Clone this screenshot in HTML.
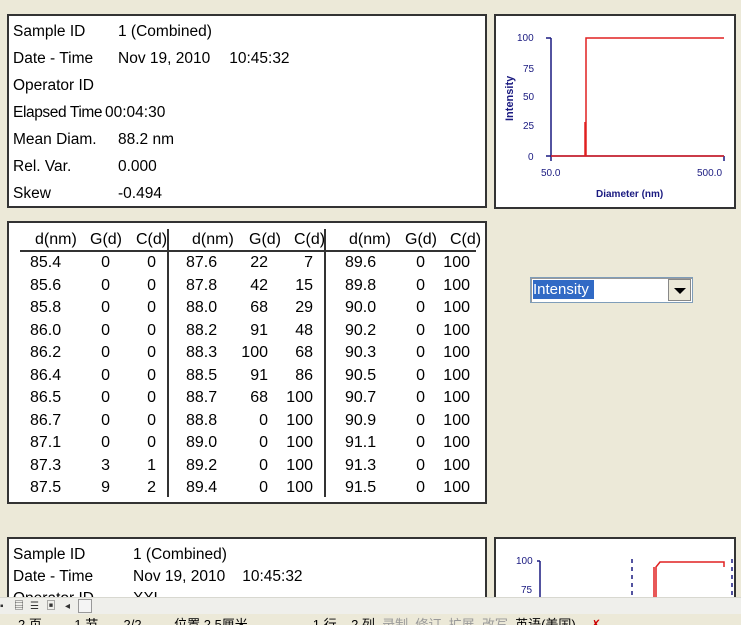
<!DOCTYPE html>
<html><head><meta charset="utf-8"><style>
html,body{margin:0;padding:0;}
body{width:741px;height:625px;overflow:hidden;background:#ECE9D8;position:relative;font-family:"Liberation Sans","Noto Sans CJK SC",sans-serif;font-size:15.5px;color:#000;}
.box{position:absolute;background:#fff;border:2px solid #333;box-sizing:border-box;}
.t{position:absolute;white-space:nowrap;line-height:16px;}
.r{text-align:right;}
.col{position:absolute;top:252px;line-height:22.5px;font-size:16px;text-align:right;}
.h{position:absolute;top:231px;font-size:16px;white-space:nowrap;line-height:18px;}
</style></head><body>

<div class="box" style="left:7px;top:14px;width:480px;height:194px;"></div>
<div class="t" style="left:13px;top:24px">Sample ID</div><div class="t" style="left:118px;top:24px">1 (Combined)</div>
<div class="t" style="left:13px;top:51px">Date - Time</div><div class="t" style="left:118px;top:51px">Nov 19, 2010<span style="display:inline-block;width:19px"></span>10:45:32</div>
<div class="t" style="left:13px;top:78px">Operator ID</div>
<div class="t" style="left:13px;top:105px;letter-spacing:-0.4px">Elapsed Time</div><div class="t" style="left:105px;top:105px">00:04:30</div>
<div class="t" style="left:13px;top:132px">Mean Diam.</div><div class="t" style="left:118px;top:132px">88.2 nm</div>
<div class="t" style="left:13px;top:159px">Rel. Var.</div><div class="t" style="left:118px;top:159px">0.000</div>
<div class="t" style="left:13px;top:186px">Skew</div><div class="t" style="left:118px;top:186px">-0.494</div>

<div class="box" style="left:494px;top:14px;width:242px;height:195px;"></div>
<svg style="position:absolute;left:494px;top:14px" width="242" height="195">
<g font-family="Liberation Sans" font-size="10" fill="#1a1a80">
<text x="23" y="27">100</text><text x="29" y="58">75</text><text x="29" y="86">50</text><text x="29" y="115">25</text><text x="34" y="146">0</text>
<text x="47" y="162">50.0</text><text x="203" y="162">500.0</text>
<text x="102" y="183" font-weight="bold">Diameter (nm)</text>
<text transform="translate(19,107) rotate(-90)" font-weight="bold" font-size="11">Intensity</text>
</g>
<path d="M57,24V142H230M52,24H57M52,142H57M57,142V147M230,142V147" stroke="#1a1a80" stroke-width="1.5" fill="none"/>
<path d="M57,142H230M92,142V24H230M91,142V108" stroke="#e02020" stroke-width="1.5" fill="none"/>
</svg>

<div class="box" style="left:7px;top:221px;width:480px;height:283px;"></div>
<div style="position:absolute;left:20px;top:250px;width:456px;height:2px;background:#333"></div>
<div style="position:absolute;left:167px;top:229px;width:2px;height:268px;background:#333"></div>
<div style="position:absolute;left:324px;top:229px;width:2px;height:268px;background:#333"></div>

<div class="h" style="left:35px">d(nm)</div>
<div class="h" style="left:90px">G(d)</div>
<div class="h" style="left:136px">C(d)</div>
<div class="h" style="left:192px">d(nm)</div>
<div class="h" style="left:249px">G(d)</div>
<div class="h" style="left:294px">C(d)</div>
<div class="h" style="left:349px">d(nm)</div>
<div class="h" style="left:405px">G(d)</div>
<div class="h" style="left:450px">C(d)</div>

<div class="col" style="left:30px;text-align:left">85.4<br>85.6<br>85.8<br>86.0<br>86.2<br>86.4<br>86.5<br>86.7<br>87.1<br>87.3<br>87.5</div>
<div class="col" style="left:60px;width:50px">0<br>0<br>0<br>0<br>0<br>0<br>0<br>0<br>0<br>3<br>9</div>
<div class="col" style="left:100px;width:56px">0<br>0<br>0<br>0<br>0<br>0<br>0<br>0<br>0<br>1<br>2</div>
<div class="col" style="left:186px;text-align:left">87.6<br>87.8<br>88.0<br>88.2<br>88.3<br>88.5<br>88.7<br>88.8<br>89.0<br>89.2<br>89.4</div>
<div class="col" style="left:220px;width:48px">22<br>42<br>68<br>91<br>100<br>91<br>68<br>0<br>0<br>0<br>0</div>
<div class="col" style="left:260px;width:53px">7<br>15<br>29<br>48<br>68<br>86<br>100<br>100<br>100<br>100<br>100</div>
<div class="col" style="left:345px;text-align:left">89.6<br>89.8<br>90.0<br>90.2<br>90.3<br>90.5<br>90.7<br>90.9<br>91.1<br>91.3<br>91.5</div>
<div class="col" style="left:380px;width:45px">0<br>0<br>0<br>0<br>0<br>0<br>0<br>0<br>0<br>0<br>0</div>
<div class="col" style="left:420px;width:50px">100<br>100<br>100<br>100<br>100<br>100<br>100<br>100<br>100<br>100<br>100</div>

<div style="position:absolute;left:530px;top:277px;width:163px;height:26px;background:#fff;border:1px solid #7f9db9;box-sizing:border-box;box-shadow:inset 1px 1px #999"></div>
<div style="position:absolute;left:533px;top:280px;width:61px;height:19px;background:#316AC5;color:#fff;line-height:19px;font-size:15px">Intensity</div>
<div style="position:absolute;left:668px;top:279px;width:23px;height:22px;background:#ECE9D8;border:1px solid #888;box-sizing:border-box"></div>
<div style="position:absolute;left:674px;top:288px;width:0;height:0;border-left:6px solid transparent;border-right:6px solid transparent;border-top:6px solid #000"></div>

<div class="box" style="left:7px;top:537px;width:480px;height:80px;"></div>
<div class="t" style="left:13px;top:547px">Sample ID</div><div class="t" style="left:133px;top:547px">1 (Combined)</div>
<div class="t" style="left:13px;top:569px">Date - Time</div><div class="t" style="left:133px;top:569px">Nov 19, 2010<span style="display:inline-block;width:17px"></span>10:45:32</div>
<div class="t" style="left:13px;top:591px">Operator ID</div><div class="t" style="left:133px;top:591px">XXL</div>

<div class="box" style="left:494px;top:537px;width:242px;height:80px;"></div>
<svg style="position:absolute;left:494px;top:537px" width="242" height="80">
<g font-family="Liberation Sans" font-size="10" fill="#1a1a80"><text x="22" y="27">100</text><text x="27" y="56">75</text></g>
<path d="M46,24V80M43,24H46" stroke="#1a1a80" stroke-width="1.5" fill="none"/>
<path d="M138,22V80M238,22V80" stroke="#1a1a80" stroke-width="1.5" stroke-dasharray="4,4" fill="none"/>
<path d="M162,80V30L166,25H230V30M160,80V30" stroke="#e02020" stroke-width="1.5" fill="none"/>
</svg>

<div style="position:absolute;left:0;top:597px;width:741px;height:17px;background:#EFEFEB;border-top:1px solid #d8d8d0;font-size:10px;line-height:17px;color:#333">
<span style="position:absolute;left:0">▪</span><span style="position:absolute;left:14px">▤</span><span style="position:absolute;left:30px">☰</span><span style="position:absolute;left:46px">▣</span><span style="position:absolute;left:65px">◂</span>
<div style="position:absolute;left:78px;top:1px;width:14px;height:14px;background:#f4f4f4;border:1px solid #999;box-sizing:border-box"></div>
</div>
<div style="position:absolute;left:0;top:614px;width:741px;height:11px;background:#ECE9D8;overflow:hidden">
<div class="t" style="left:0;top:3px;font-size:13px;color:#000">&nbsp;&nbsp;&nbsp;&nbsp;&nbsp;2 页&nbsp;&nbsp;&nbsp;&nbsp;&nbsp;&nbsp;&nbsp;&nbsp;&nbsp;1 节&nbsp;&nbsp;&nbsp;&nbsp;&nbsp;&nbsp;&nbsp;2/2&nbsp;&nbsp;&nbsp;&nbsp;&nbsp;&nbsp;&nbsp;&nbsp;&nbsp;位置 2.5厘米&nbsp;&nbsp;&nbsp;&nbsp;&nbsp;&nbsp;&nbsp;&nbsp;&nbsp;&nbsp;&nbsp;&nbsp;&nbsp;&nbsp;&nbsp;&nbsp;&nbsp;&nbsp;1 行&nbsp;&nbsp;&nbsp;&nbsp;2 列&nbsp;&nbsp;<span style="color:#999">录制&nbsp;&nbsp;修订&nbsp;&nbsp;扩展&nbsp;&nbsp;改写</span>&nbsp;&nbsp;英语(美国)&nbsp;&nbsp;&nbsp;&nbsp;<span style="color:#c00">✗</span></div>
</div>
</body></html>
